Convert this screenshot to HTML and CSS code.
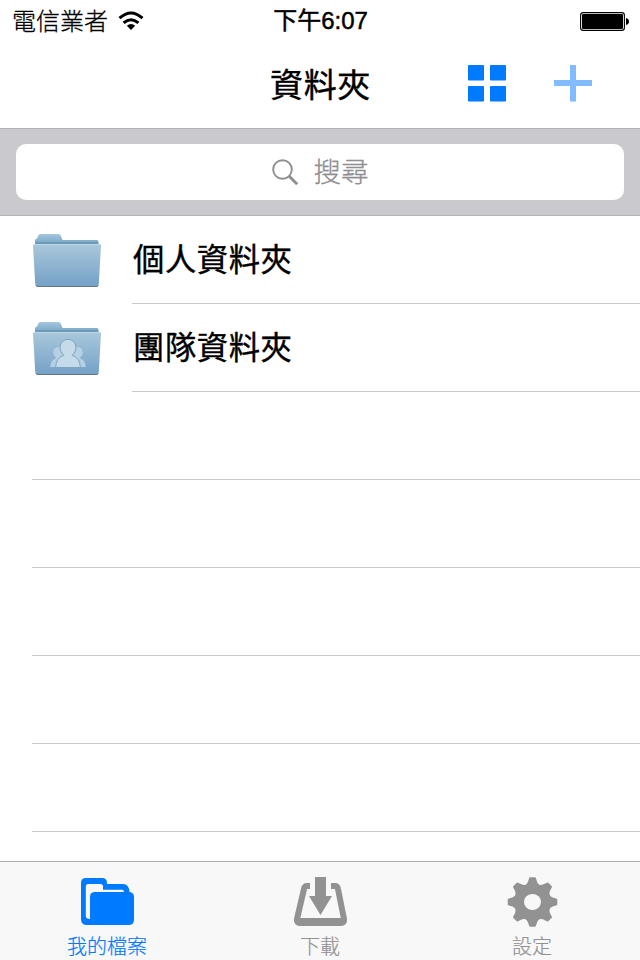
FILE: index.html
```html
<!DOCTYPE html>
<html lang="zh-Hant">
<head>
<meta charset="utf-8">
<title>資料夾</title>
<link rel="stylesheet" href="styles.css">
</head>
<body>
<div class="screen">
  <header class="status">
    <div class="carrier"><span>電信業者</span>
      <svg class="wifi" width="26" height="20" viewBox="0 0 26 20"><g fill="none" stroke="#000" stroke-width="3"><path d="M1.500 7.200Q13-3.200 24.500 7.200"/><path d="M5.600 11.900Q13 5.500 20.400 11.900"/></g><path d="M8.800 14.800Q13 11.200 17.200 14.800L13 19z"/></svg>
    </div>
    <div class="time">下午6:07</div>
    <svg class="battery" width="50" height="20" viewBox="0 0 50 20"><rect x=".6" y=".6" width="43.8" height="17.8" rx="2.7" fill="none" stroke="#000" stroke-width="1.1"/><rect x="2" y="2" width="41" height="15" rx="1.3"/><path d="M46 6q3 .6 3 3.500T46 13z"/></svg>
  </header>
  <nav class="navbar">
    <h1>資料夾</h1>
    <div class="actions">
      <svg width="38" height="37" viewBox="0 0 38 37" fill="#007aff"><rect width="16" height="15.500" rx=".8"/><rect x="22" width="16" height="15.500" rx=".8"/><rect y="21" width="16" height="15.500" rx=".8"/><rect x="22" y="21" width="16" height="15.500" rx=".8"/></svg>
      <svg width="38" height="37" viewBox="0 0 38 37" fill="#80bcff"><path d="M16 0h6v15h16v6H22v15.500h-6V21H0v-6h16z"/></svg>
    </div>
  </nav>
  <div class="searchbar">
    <div class="search">
      <svg width="27" height="27" viewBox="0 0 27 27" fill="none" stroke="#8e8e93"><circle cx="10.500" cy="10.500" r="9.300" stroke-width="1.900"/><path d="M17.200 17.200l8 8" stroke-width="3"/></svg>
      <span>搜尋</span>
    </div>
  </div>
  <main class="list">
    <svg class="defs" width="0" height="0">
      <defs>
        <linearGradient id="front" x2="0" y2="1"><stop stop-color="#a9c8dc"/><stop offset="1" stop-color="#75a2c7"/></linearGradient>
        <linearGradient id="back" x2="0" y2="1"><stop stop-color="#a6c7dc"/><stop offset="1" stop-color="#6b9dbf"/></linearGradient>
        <g id="folder">
          <path d="M3 12V7q0-1 2-1.500l1.200-3Q6.700 1 8.300 1h18.200q1.700 0 2.300 1.500L30.500 7H65q1.500 0 1.500 1.500V13H3z" fill="url(#back)"/>
          <path d="M3 10h63.500" stroke="#628fae" stroke-width="1"/>
          <path d="M3.300 52q.5 2 2.500 2h58.500q2 0 2.500-2z" fill="#68747e"/>
          <path d="M1 12.500Q1 11 2.500 11h65q1.700 0 1.500 1.500l-2.200 38.300Q66.600 52.900 64.500 52.900h-59Q3.400 52.900 3.200 50.800z" fill="url(#front)"/>
          <path d="M2 11.600h66" stroke="#c0d8e6" stroke-width="1"/>
        </g>
      </defs>
    </svg>
    <div class="row filled">
      <svg class="folder" width="70" height="56" viewBox="0 0 70 56"><use href="#folder"/></svg>
      <span>個人資料夾</span>
    </div>
    <div class="row filled">
      <svg class="folder" width="70" height="56" viewBox="0 0 70 56"><use href="#folder"/>
        <g transform="translate(1)" fill="#b5d0e3"><path d="M17.200 46q.3-6.500 6-9-3.500-3-2.800-7 1.200-4 5.600-4t5.500 4q1 4-2.500 7 5 2 5 9zM52.800 46q-.3-6.500-6-9 3.500-3 2.800-7-1.200-4-5.600-4t-5.500 4q-1 4 2.500 7-5 2-5 9z"/><path fill="#c5dbe9" stroke="#7ba5c3" d="M22.700 46.500q0-9.500 8.100-12.200-3.800-3-3.800-8a8 8 0 0 1 16 0q0 5-3.800 8 8.100 2.700 8.100 12.200z"/></g>
      </svg>
      <span>團隊資料夾</span>
    </div>
    <div class="row"></div>
    <div class="row"></div>
    <div class="row"></div>
    <div class="row"></div>
    <div class="row"></div>
  </main>
  <footer class="tabs">
    <div class="tab first active">
      <svg width="54" height="52" viewBox="0 0 54 52"><path fill="#007aff" d="M5 2h16q5 0 5 5v1h16q6 0 6.500 8 4.500.5 4.500 5v22.500q0 5.500-5.500 5.500H6Q0 49 0 43V7q0-5 5-5z"/><path fill="#f8f8f8" d="M4.800 10.500q0-2.500 2.500-2.500H19.500q2.500 0 2.500 2.500v3.300H41q2 0 2 2.200H14q-5 0-5 5v22q-4.200 0-4.200-3z"/></svg>
      <span>我的檔案</span>
    </div>
    <div class="tab second">
      <svg width="54" height="52" viewBox="0 0 54 52"><path fill="#929292" d="M22 1h11v19h6L27.500 39 16 20h6z"/><path fill="none" stroke="#929292" stroke-width="6" stroke-linejoin="round" d="M17 10h-3q-2.500 0-3 3L4 43q-.5 4 3 4h41q3.500 0 3-4L45 13q-.5-3-3-3h-4"/><path d="M6 44h44" stroke="#929292" stroke-width="4"/></svg>
      <span>下載</span>
    </div>
    <div class="tab third">
      <svg width="54" height="52" viewBox="0 0 54 52"><g transform="translate(27.500 26)"><g fill="#929292"><circle r="18.500"/><g id="teeth"><path id="tooth" d="M-8.500-16Q-4.800-18-4-22l.7-2Q-3.200-24.800-2.500-24.800h5q.7 0 .8.800L4-22q.8 4 4.500 6z"/><use href="#tooth" transform="rotate(45)"/><use href="#tooth" transform="rotate(90)"/><use href="#tooth" transform="rotate(135)"/></g><use href="#teeth" transform="rotate(180)"/></g><ellipse rx="8.500" ry="8" fill="#f8f8f8"/></g></svg>
      <span>設定</span>
    </div>
  </footer>
</div>
</body>
</html>
```
FILE: styles.css
```css
* { box-sizing: border-box; }
body { margin: 0; background: #fff; color: #000; font-family: "Liberation Sans", "Noto Sans CJK TC", sans-serif; }
svg { display: block; flex: none; }
.screen { width: 640px; height: 960px; display: flex; flex-direction: column; overflow: hidden; }
.status { height: 40px; display: grid; grid-template-columns: 1fr auto 1fr; align-items: center; padding: 0 11px 0 12px; font-size: 24px; line-height: 40px; }
.carrier { display: flex; align-items: center; gap: 10px; font-weight: 300; -webkit-text-stroke: .3px; }
.wifi { margin-top: -1px; }
.carrier span { padding-top: 2px; }
.time { font-weight: 400; -webkit-text-stroke: .5px; }
.battery { justify-self: end; margin: 1px -1px 0 0; }
.navbar { height: 89px; flex: none; border-bottom: 1px solid #b2b2b6; display: grid; grid-template-columns: 1fr auto 1fr; align-items: center; }
h1 { grid-column: 2; margin: 0; padding: 3px 0 0 1px; font-size: 33px; line-height: 86px; letter-spacing: .6px; font-weight: 400; -webkit-text-stroke: .4px; }
.actions { display: flex; gap: 48px; padding-left: 97px; margin-top: -2px; }
.searchbar { height: 87px; flex: none; padding: 15px 16px; background: #c9c9ce; border-bottom: 1px solid #b4b4b8; }
.search { height: 56px; border-radius: 10px; background: #fff; color: #8e8e93; display: flex; justify-content: center; align-items: center; gap: 15px; font-size: 27.5px; font-weight: 300; line-height: 54px; -webkit-text-stroke: .3px; }
.search span { padding-top: 1px; }
.list { flex: 1; min-height: 0; }
.defs { height: 0; }
.row { height: 88px; margin-left: 32px; border-bottom: 1px solid #c8c7cc; }
.filled { position: relative; display: flex; align-items: center; gap: 31px; font-size: 31.3px; font-weight: 400; line-height: 85px; letter-spacing: .6px; border: 0; -webkit-text-stroke: .4px; }
.filled::after { content: ""; position: absolute; left: 100px; right: 0; bottom: 0; height: 1px; background: #c8c7cc; }
.folder { margin-top: 2px; }
.tabs { height: 99px; flex: none; border-top: 1px solid #adadad; background: #f8f8f8; display: grid; grid-template-columns: 214px 212px 214px; }
.tab { display: flex; flex-direction: column; align-items: center; padding-top: 14px; color: #929292; font-size: 20px; font-weight: 300; line-height: 34px; -webkit-text-stroke: .2px; }
.tab span { padding-top: 2px; }
.first svg { margin-left: 1px; }
.third { padding-right: 2px; }
.active { color: #007aff; }
```
